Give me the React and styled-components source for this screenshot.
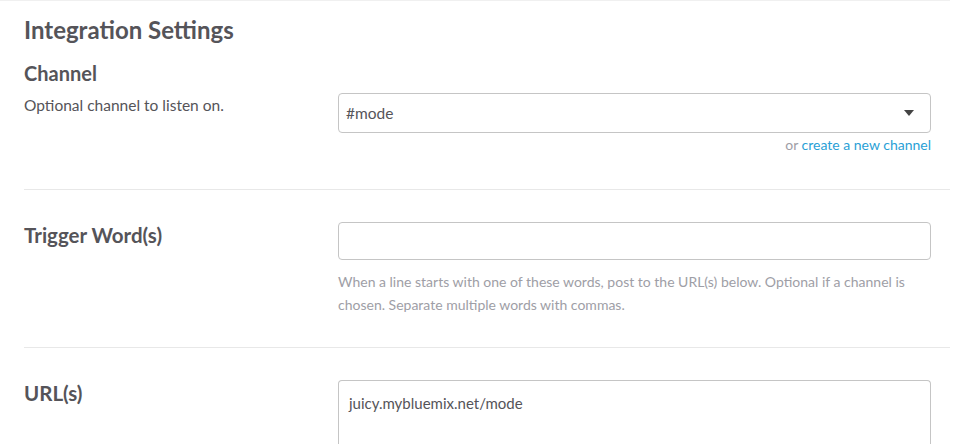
import React from "react";
import styled, { createGlobalStyle } from "styled-components";

const GlobalStyle = createGlobalStyle`
  body {
    margin: 0;
    background: #fff;
    font-family: Lato, "Open Sans", sans-serif;
    color: #555459;
  }
`;

const Page = styled.div`
  border-top: 1px solid #f0f0f0;
  padding: 0 0 0 24px;
  width: 926px;
`;

const Section = styled.section`
  padding: ${(p) => p.pad || "0"};
  border-bottom: ${(p) => (p.last ? "none" : "1px solid #e8e8e8")};
`;

const Title = styled.h2`
  margin: 0;
  font-size: 24px;
  font-weight: 700;
  line-height: 30px;
  color: #555459;
`;

const SubTitle = styled.h3`
  margin: 15px 0 0;
  font-size: 20px;
  font-weight: 700;
  line-height: 26px;
  color: #555459;
`;

const Row = styled.div`
  display: grid;
  grid-template-columns: 314px 593px;
  align-items: start;
  margin-top: ${(p) => p.gap || "0"};
`;

const Label = styled.div`
  font-size: ${(p) => (p.big ? "20.5px" : "15.5px")};
  font-weight: ${(p) => (p.big ? 700 : 400)};
  line-height: ${(p) => (p.big ? "26px" : "22px")};
  padding-top: ${(p) => p.top || "0"};
  color: #555459;
`;

const Field = styled.div`
  display: flex;
  flex-direction: column;
`;

const Select = styled.div`
  height: 40px;
  box-sizing: border-box;
  border: 1px solid #c5c5c5;
  border-radius: 4px;
  display: flex;
  align-items: center;
  justify-content: space-between;
  padding: 0 16px 0 7px;
  font-size: 15.5px;
  color: #555459;
`;

const Caret = styled.span`
  width: 0;
  height: 0;
  border-left: 5px solid transparent;
  border-right: 5px solid transparent;
  border-top: 6px solid #444;
`;

const Input = styled.div`
  height: ${(p) => p.h || "38px"};
  box-sizing: border-box;
  border: 1px solid #c5c5c5;
  border-bottom: ${(p) => (p.open ? "none" : "1px solid #c5c5c5")};
  border-radius: ${(p) => (p.open ? "4px 4px 0 0" : "4px")};
  padding: 12px 10px 0;
  font-size: 15px;
  line-height: 20px;
  color: #555459;
`;

const Hint = styled.div`
  text-align: right;
  font-size: 14px;
  line-height: 18px;
  margin-top: 3px;
  color: #9e9ea6;

  a {
    color: #2a9fd6;
    text-decoration: none;
  }
`;

const Help = styled.p`
  margin: 10px 0 0;
  font-size: 14px;
  line-height: 23px;
  color: #9e9ea6;
`;

export default function App() {
  return (
    <>
      <GlobalStyle />
      <Page>
        <Section pad="14px 0 35px">
          <Title>Integration Settings</Title>
          <SubTitle>Channel</SubTitle>
          <Row gap="7px">
            <Label top="1px">Optional channel to listen on.</Label>
            <Field>
              <Select>
                #mode
                <Caret />
              </Select>
              <Hint>
                or <a href="#">create a new channel</a>
              </Hint>
            </Field>
          </Row>
        </Section>
        <Section pad="32px 0 31px">
          <Row>
            <Label big>Trigger Word(s)</Label>
            <Field>
              <Input />
              <Help>
                When a line starts with one of these words, post to the URL(s) below. Optional if a channel is
                chosen. Separate multiple words with commas.
              </Help>
            </Field>
          </Row>
        </Section>
        <Section last pad="32px 0 0">
          <Row>
            <Label big>URL(s)</Label>
            <Field>
              <Input open h="64px">juicy.mybluemix.net/mode</Input>
            </Field>
          </Row>
        </Section>
      </Page>
    </>
  );
}
